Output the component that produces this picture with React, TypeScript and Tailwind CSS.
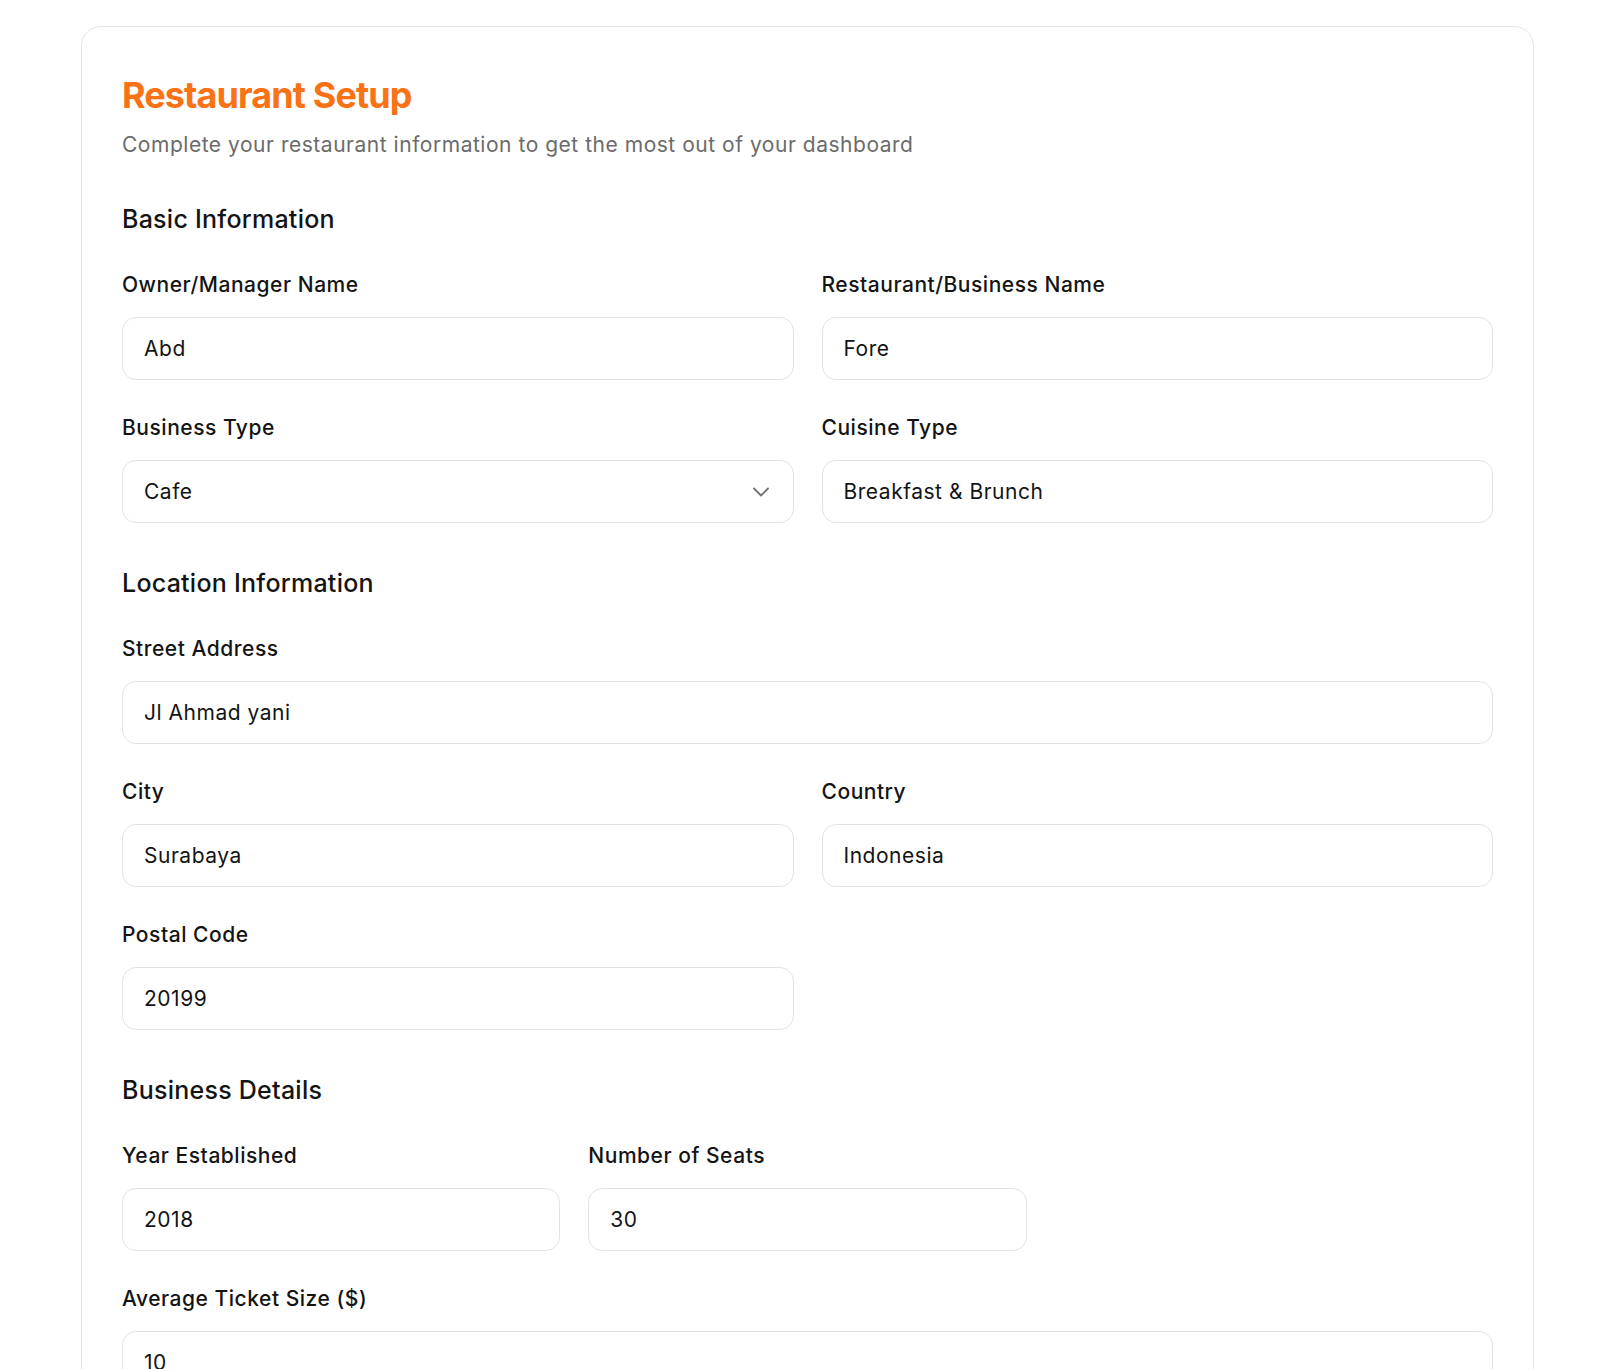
import { ChevronDown } from "lucide-react";

type FieldProps = {
  label: string;
  value: string;
};

function Field({ label, value }: FieldProps) {
  return (
    <div className="flex flex-col">
      <label className="mb-[18px] text-[21px] leading-[28px] font-medium tracking-[0.025em] text-[#141414]">
        {label}
      </label>
      <input
        defaultValue={value}
        className="h-[63px] w-full rounded-[14px] border border-[#e3e3e3] bg-white px-[21px] text-[21px] tracking-[0.025em] text-[#141414] outline-none"
      />
    </div>
  );
}

function SelectField({ label, value, options }: FieldProps & { options: string[] }) {
  return (
    <div className="flex flex-col">
      <label className="mb-[18px] text-[21px] leading-[28px] font-medium tracking-[0.025em] text-[#141414]">
        {label}
      </label>
      <div className="relative">
        <select
          defaultValue={value}
          className="h-[63px] w-full appearance-none rounded-[14px] border border-[#e3e3e3] bg-white px-[21px] text-[21px] tracking-[0.025em] text-[#141414] outline-none"
        >
          {options.map((o) => (
            <option key={o}>{o}</option>
          ))}
        </select>
        {/* chevron sits over the select */}
        <ChevronDown
          className="pointer-events-none absolute right-[19px] top-1/2 h-7 w-7 -translate-y-1/2 text-[#737373]"
          strokeWidth={1.6}
        />
      </div>
    </div>
  );
}

function Section({ title, children }: { title: string; children: React.ReactNode }) {
  return (
    <section className="mt-[44px] first:mt-[45px]">
      <h2 className="text-[25px] leading-[32px] font-medium tracking-[0.01em] text-[#141414]">
        {title}
      </h2>
      <div className="mt-[36px] flex flex-col gap-[34px]">{children}</div>
    </section>
  );
}

export default function App() {
  return (
    <main
      className="min-h-screen bg-white pt-[26px] pb-10"
      style={{ fontFamily: "Inter, 'Noto Sans', sans-serif" }}
    >
      <div className="ml-[81px] w-[1453px] rounded-[20px] border border-[#e5e5e5] bg-white px-10 pt-[45px] pb-12">
        {/* Header */}
        <h1 className="text-[36px] leading-[46px] font-bold tracking-tight text-[#f97316]">
          Restaurant Setup
        </h1>
        <p className="mt-[13px] text-[21px] leading-[28px] tracking-[0.025em] text-[#6b6b6b]">
          Complete your restaurant information to get the most out of your dashboard
        </p>

        {/* --- Basic Information --- */}
        <Section title="Basic Information">
          <div className="grid grid-cols-2 gap-x-7">
            <Field label="Owner/Manager Name" value="Abd" />
            <Field label="Restaurant/Business Name" value="Fore" />
          </div>
          <div className="grid grid-cols-2 gap-x-7">
            <SelectField
              label="Business Type"
              value="Cafe"
              options={["Restaurant", "Cafe", "Bar", "Food Truck", "Bakery"]}
            />
            <Field label="Cuisine Type" value="Breakfast & Brunch" />
          </div>
        </Section>

        {/* --- Location Information --- */}
        <Section title="Location Information">
          <Field label="Street Address" value="Jl Ahmad yani" />
          <div className="grid grid-cols-2 gap-x-7">
            <Field label="City" value="Surabaya" />
            <Field label="Country" value="Indonesia" />
          </div>
          <div className="grid grid-cols-2 gap-x-7">
            <Field label="Postal Code" value="20199" />
          </div>
        </Section>

        {/* --- Business Details --- */}
        <Section title="Business Details">
          <div className="grid grid-cols-3 gap-x-7">
            <Field label="Year Established" value="2018" />
            <Field label="Number of Seats" value="30" />
          </div>
          <Field label="Average Ticket Size ($)" value="10" />
        </Section>
      </div>
    </main>
  );
}
